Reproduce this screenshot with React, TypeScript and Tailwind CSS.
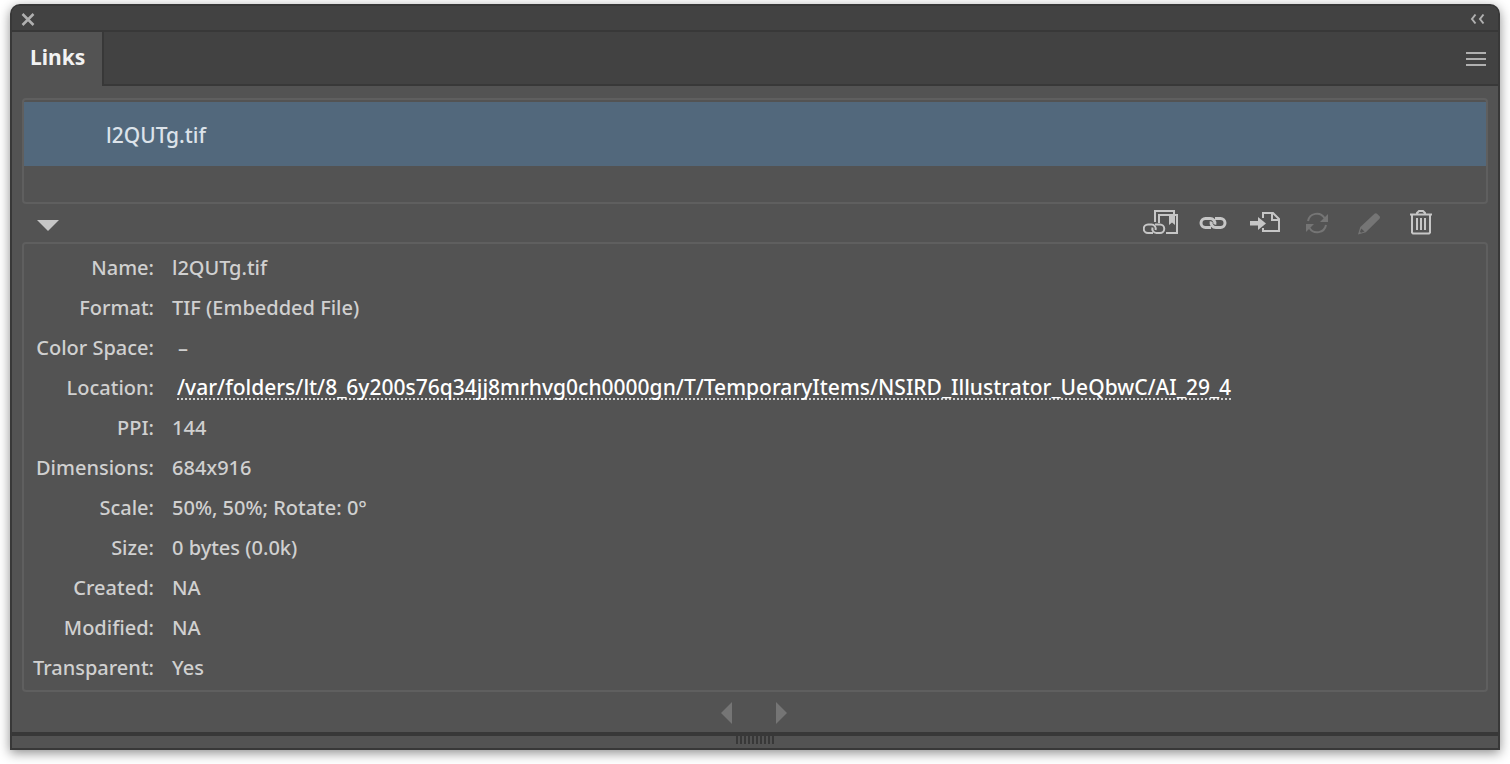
import type { ReactNode } from "react";

type Row = { label: string; value: ReactNode };

const rows: Row[] = [
  { label: "Name:", value: "l2QUTg.tif" },
  { label: "Format:", value: "TIF (Embedded File)" },
  { label: "Color Space:", value: <span className="pl-1.5">–</span> },
  {
    label: "Location:",
    value: (
      <a
        href="#location"
        className="ml-[5px] inline-block h-[23px] border-b-2 border-dotted border-[#d0d0d0] text-[21px] leading-5 text-white"
      >
        /var/folders/lt/8_6y200s76q34jj8mrhvg0ch0000gn/T/TemporaryItems/NSIRD_Illustrator_UeQbwC/AI_29_4
      </a>
    ),
  },
  { label: "PPI:", value: "144" },
  { label: "Dimensions:", value: "684x916" },
  { label: "Scale:", value: "50%, 50%; Rotate: 0°" },
  { label: "Size:", value: "0 bytes (0.0k)" },
  { label: "Created:", value: "NA" },
  { label: "Modified:", value: "NA" },
  { label: "Transparent:", value: "Yes" },
];

function Icon({ children }: { children: ReactNode }) {
  return (
    <svg width="36" height="28" viewBox="0 0 36 28" fill="none" stroke="currentColor" strokeWidth="2" aria-hidden="true">
      {children}
    </svg>
  );
}

function RelinkLibraryIcon() {
  return (
    <Icon>
      <path d="M12 13V2h19v3M16 14V6h18v18H23" />
      <path d="M26 6h6v10l-3-2.500-3 2.500z" fill="currentColor" stroke="none" />
      <path d="M10 24H5a4.200 4.200 0 0 1 0-8.500h3.500a4.200 4.200 0 0 1 4 5.500" />
      <path d="M12 15.500h5a4.200 4.200 0 0 1 0 8.500h-3.500a4.200 4.200 0 0 1-4-5.500" />
    </Icon>
  );
}

function RelinkIcon() {
  return (
    <Icon>
      <path
        d="M16 18.500h-5.500a4.500 4.500 0 0 1 0-9h4.500a4.800 4.800 0 0 1 4.800 6M20 9.500h5.500a4.500 4.500 0 0 1 0 9h-4.500a4.800 4.800 0 0 1-4.800-6"
        strokeWidth="3"
      />
    </Icon>
  );
}

function GoToLinkIcon() {
  return (
    <Icon>
      <path d="M16 9V4h10l6 6v12H16v-3M25 4v7h7" />
      <path d="M3 12h8V8l8 6.500-8 6.500v-4.500H3z" fill="currentColor" stroke="none" />
    </Icon>
  );
}

function UpdateIcon() {
  return (
    <Icon>
      <path d="M9 12a9 9 0 0 1 16.500-3M27 16a9 9 0 0 1-16.500 3" strokeWidth="2" />
      <path d="M29 5v8h-8zM7 23v-8h8z" fill="currentColor" stroke="none" />
    </Icon>
  );
}

function EditIcon() {
  return (
    <Icon>
      <path d="M23.500 4.800a2 2 0 0 1 2.600 0l2.400 2.400a2 2 0 0 1 0 2.600L14.800 23.200 7 25.500 9.300 18z" fill="currentColor" stroke="none" />
      <path d="M10.300 19.500l3.200 3-3.500 1.200-1-1z" fill="#535353" stroke="none" />
    </Icon>
  );
}

function TrashIcon() {
  return (
    <Icon>
      <path d="M7 5.500h22M9 6v17.500l1 1h16l1-1V6M14 5V4l2-2h4l2 2v1" />
      <path d="M14 9v12M18 9v12M22 9v12" />
    </Icon>
  );
}

const actions = [
  { label: "Relink from CC Libraries", icon: <RelinkLibraryIcon />, disabled: false },
  { label: "Relink", icon: <RelinkIcon />, disabled: false },
  { label: "Go To Link", icon: <GoToLinkIcon />, disabled: false },
  { label: "Update Link", icon: <UpdateIcon />, disabled: true },
  { label: "Edit Original", icon: <EditIcon />, disabled: true },
  { label: "Delete", icon: <TrashIcon />, disabled: false },
];

export default function App() {
  return (
    <div className="min-h-screen bg-white px-2.5 pt-1 pb-3.5 font-['Noto_Sans',sans-serif] text-xl leading-6 font-medium text-[#d0d0d0]">
      <section
        aria-label="Links panel"
        className="overflow-hidden rounded-t-[10px] border-2 border-[#383838] bg-[#535353] shadow-[0_3px_12px_rgba(0,0,0,0.45)]"
      >
        <header className="flex h-[26px] items-center justify-between border-b-2 border-[#383838] bg-[#424242] pr-3 pl-2 text-[#b0b0b0]">
          <button type="button" aria-label="Close">
            <svg width="16" height="16" viewBox="0 0 16 16" fill="none" stroke="currentColor" strokeWidth="2.500">
              <path d="M2.500 4l11 11M13.500 4l-11 11" />
            </svg>
          </button>
          <button type="button" aria-label="Collapse panel">
            <svg width="16" height="14" viewBox="0 0 16 14" fill="none" stroke="currentColor" strokeWidth="2">
              <path d="M5.500 3.500L2 8l3.500 4.500M13.500 3.500L10 8l3.500 4.500" />
            </svg>
          </button>
        </header>

        <div className="flex h-[54px]">
          <div role="tablist" className="flex">
            <button type="button" role="tab" aria-selected="true" className="flex w-[90px] items-start pt-[13px] pl-[18px] text-[21px] font-bold text-[#f2f2f2]">
              Links
            </button>
          </div>
          <div className="flex flex-1 items-center justify-end border-b-2 border-l-2 border-[#383838] bg-[#424242] pr-3">
            <button type="button" aria-label="Panel menu" className="text-[#b0b0b0]">
              <svg width="20" height="16" viewBox="0 0 20 16" fill="none" stroke="currentColor" strokeWidth="2">
                <path d="M0 3h20M0 9h20M0 15h20" />
              </svg>
            </button>
          </div>
        </div>

        <div className="px-2.5 pt-3">
          <ul className="h-[106px] rounded-sm border-2 border-[#5f5f5f] pt-0.5">
            <li aria-current="true" className="flex h-16 items-center bg-[#52687c] pt-0.5 pl-[82px] text-[21px] text-[#dce3ea]">
              l2QUTg.tif
            </li>
          </ul>

          <div className="flex h-[38px] items-center justify-between pr-[49px] pl-3.5">
            <button type="button" aria-label="Hide link info" className="text-[#c6c6c6]">
              <svg width="24" height="16" viewBox="0 0 24 16" fill="currentColor">
                <path d="M1 5h22L12 16z" />
              </svg>
            </button>
            <div className="flex gap-4">
              {actions.map((a) => (
                <button
                  key={a.label}
                  type="button"
                  aria-label={a.label}
                  disabled={a.disabled}
                  className="text-[#c6c6c6] disabled:text-[#757575]"
                >
                  {a.icon}
                </button>
              ))}
            </div>
          </div>

          <div className="rounded-sm border-2 border-[#5f5f5f] pt-1 pb-0.5">
            <table className="w-full">
              <tbody>
                {rows.map((r) => (
                  <tr key={r.label} className="h-10">
                    <th scope="row" className="w-[130px] p-0 text-right font-medium whitespace-nowrap">
                      {r.label}
                    </th>
                    <td className="py-0 pr-0 pl-[18px] whitespace-nowrap">{r.value}</td>
                  </tr>
                ))}
              </tbody>
            </table>
          </div>
        </div>

        <nav aria-label="Linked files" className="flex h-10 items-center justify-center gap-11 pt-0.5 pr-0.5 text-[#757575]">
          <button type="button" disabled aria-label="Previous link">
            <svg width="11" height="22" viewBox="0 0 11 22" fill="currentColor">
              <path d="M11 0v22L0 11z" />
            </svg>
          </button>
          <button type="button" disabled aria-label="Next link">
            <svg width="11" height="22" viewBox="0 0 11 22" fill="currentColor">
              <path d="M0 0v22l11-11z" />
            </svg>
          </button>
        </nav>

        <footer className="flex h-4 justify-center border-t-4 border-[#383838]">
          <svg width="38" height="8" viewBox="0 0 38 8" stroke="#383838" strokeWidth="8" strokeDasharray="2 2" aria-hidden="true">
            <path d="M0 4h38" />
          </svg>
        </footer>
      </section>
    </div>
  );
}
